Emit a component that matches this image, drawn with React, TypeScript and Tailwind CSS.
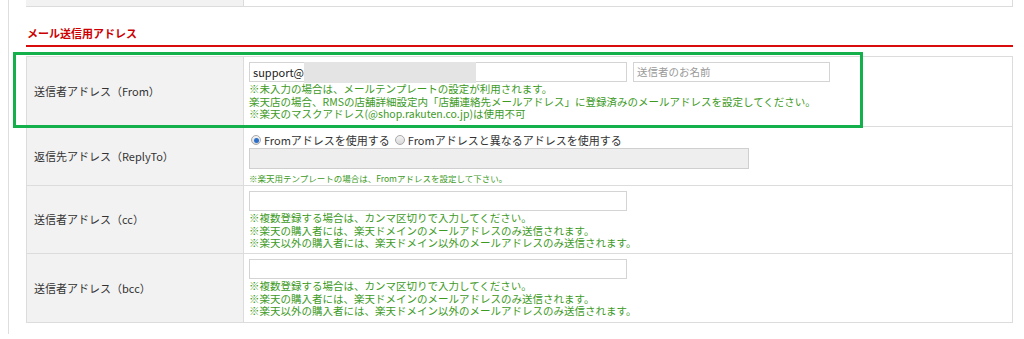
import React from 'react';

const font = { fontFamily: '"Noto Sans CJK JP", "Noto Sans", sans-serif' };

const Note: React.FC<{ lines: string[]; small?: boolean }> = ({ lines, small }) => (
  <div className={small ? 'text-[8.5px] leading-[12px] text-[#3c9a1e] mt-[3px]' : 'text-[10.5px] leading-[12.5px] text-[#3c9a1e] mt-[1px]'}>
    {lines.map((l) => (
      <div key={l} className="whitespace-nowrap">{l}</div>
    ))}
  </div>
);

const Row: React.FC<{ label: string; h: string; children: React.ReactNode }> = ({ label, h, children }) => (
  <div className={`flex border-b border-[#dcdcdc] ${h}`}>
    <div className="w-[217px] shrink-0 bg-[#f2f2f2] border-r border-[#dcdcdc] flex items-center pl-[7px] text-[11px] text-[#333]">
      {label}
    </div>
    <div className="flex-1 pl-[5px] pt-[5px]">{children}</div>
  </div>
);

const Radio: React.FC<{ checked?: boolean; label: string }> = ({ checked, label }) => (
  <label className="flex items-center gap-[3px] text-[11px] text-[#333]">
    <span className="w-[10px] h-[10px] rounded-full border border-[#a8a8a8] bg-gradient-to-b from-[#f4f4f4] to-[#d8d8d8] flex items-center justify-center">
      {checked && <span className="w-[5px] h-[5px] rounded-full bg-[#2a6fc9]" />}
    </span>
    {label}
  </label>
);

const multiNote = [
  '※複数登録する場合は、カンマ区切りで入力してください。',
  '※楽天の購入者には、楽天ドメインのメールアドレスのみ送信されます。',
  '※楽天以外の購入者には、楽天ドメイン以外のメールアドレスのみ送信されます。',
];

export default function App() {
  return (
    <div className="w-[1024px] h-[339px] bg-white pl-[8px] overflow-hidden relative" style={font}>
      <div className="h-[334px] border-l border-[#dedede] pl-[17px] pr-[11px]">
        {/* tail of previous table */}
        <div className="flex h-[7px] border-b border-r border-[#dcdcdc]">
          <div className="w-[218px] bg-[#f2f2f2] border-r border-[#dcdcdc]" />
          <div className="flex-1" />
        </div>

        <div className="pt-[19px] pl-[1px] text-[11px] leading-[14px] font-bold text-[#cc0000]">メール送信用アドレス</div>
        <div className="mt-[5px] h-[2px] bg-[#d80c0c]" />

        <div className="mt-[9px] border-t border-l border-r border-[#dcdcdc]">
          <Row label="送信者アドレス（From）" h="h-[70px]">
            <div className="flex gap-[6px]">
              <div className="w-[378px] h-[20px] border border-[#d4d4d4] flex items-center text-[11px] text-[#222] pl-[3px]">
                support@
                <span className="w-[172px] h-[21px] bg-[#e4e4e4]" />
              </div>
              <div className="w-[197px] h-[20px] border border-[#d4d4d4] flex items-center text-[10.5px] text-[#9a9a9a] pl-[3px]">
                送信者のお名前
              </div>
            </div>
            <Note
              lines={[
                '※未入力の場合は、メールテンプレートの設定が利用されます。',
                '楽天店の場合、RMSの店舗詳細設定内「店舗連絡先メールアドレス」に登録済みのメールアドレスを設定してください。',
                '※楽天のマスクアドレス(@shop.rakuten.co.jp)は使用不可',
              ]}
            />
          </Row>
          <Row label="返信先アドレス（ReplyTo）" h="h-[59px]">
            <div className="flex items-center gap-[5px] pl-[2px] h-[16px]">
              <Radio checked label="Fromアドレスを使用する" />
              <Radio label="Fromアドレスと異なるアドレスを使用する" />
            </div>
            <div className="w-[500px] h-[21px] border border-[#cfcfcf] bg-[#eeeeee]" />
            <Note small lines={['※楽天用テンプレートの場合は、Fromアドレスを設定して下さい。']} />
          </Row>
          <Row label="送信者アドレス（cc）" h="h-[68px]">
            <div className="w-[378px] h-[20px] border border-[#d4d4d4]" />
            <Note lines={multiNote} />
          </Row>
          <Row label="送信者アドレス（bcc）" h="h-[69px]">
            <div className="w-[378px] h-[20px] border border-[#d4d4d4]" />
            <Note lines={multiNote} />
          </Row>
        </div>
      </div>

      {/* highlight frame drawn over the From row */}
      <div className="absolute left-[13px] top-[52px] w-[850px] h-[76px] border-[3px] border-[#14b04c] pointer-events-none" />
    </div>
  );
}
